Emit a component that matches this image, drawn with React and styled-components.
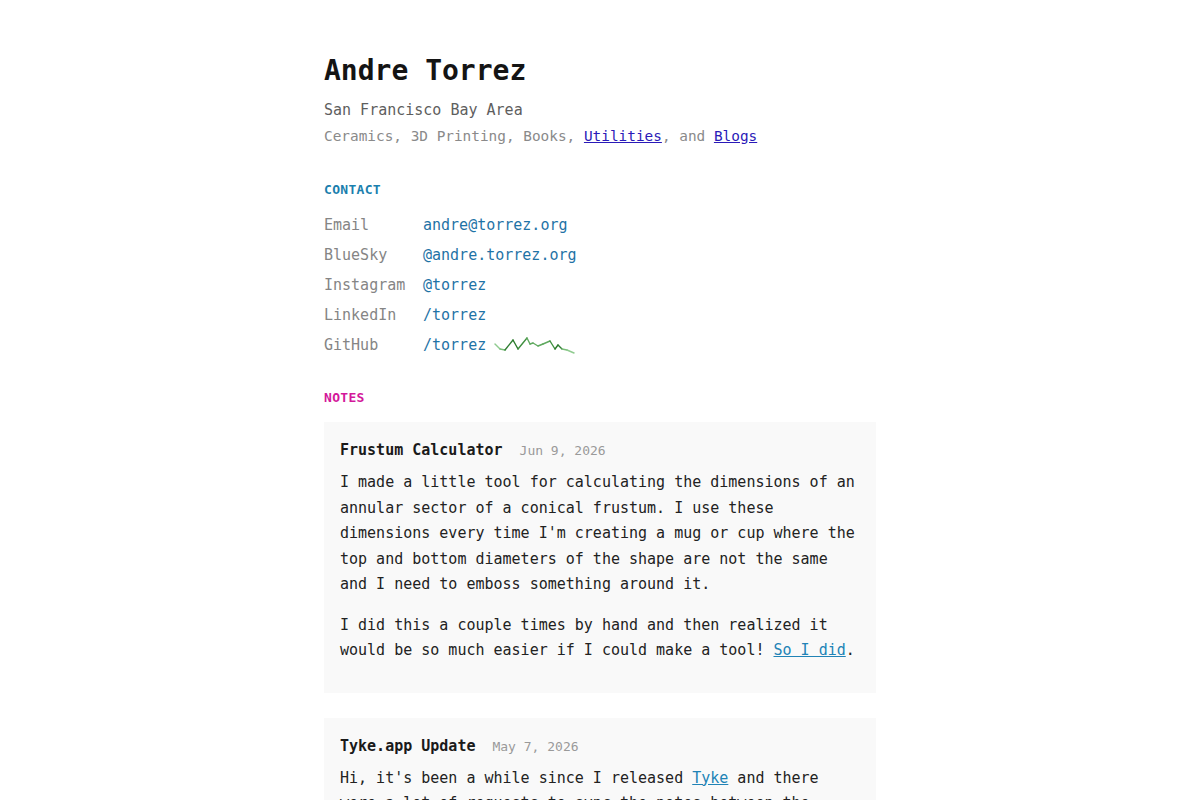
import React from 'react'
import styled, { createGlobalStyle } from 'styled-components'

const GlobalStyle = createGlobalStyle`
  html, body {
    margin: 0;
    padding: 0;
    background: #ffffff;
  }
  body {
    font-family: 'DejaVu Sans Mono', 'Liberation Mono', monospace;
    color: #222;
  }
`

const Page = styled.div`
  max-width: 552px;
  margin: 0 auto;
  padding: 54px 0 40px;
`

const Name = styled.h1`
  margin: 0;
  font-size: 28px;
  line-height: 34px;
  font-weight: bold;
  color: #141414;
`

const Tagline = styled.p`
  margin: ${({ first }) => (first ? '8.5px' : '0')} 0 0;
  font-size: ${({ small }) => (small ? '14.4px' : '15px')};
  line-height: ${({ small }) => (small ? '27px' : '26px')};
  color: ${({ small }) => (small ? '#8a8a8a' : '#5e5e5e')};
`

const PlainLink = styled.a`
  color: #2a1ab8;
  text-decoration: underline;
`

const Heading = styled.h2`
  margin: ${({ top }) => top} 0 0;
  font-size: 13px;
  line-height: 20px;
  font-weight: bold;
  letter-spacing: 0.3px;
  color: ${({ color }) => color};
`

const ContactList = styled.div`
  margin-top: 10px;
  display: grid;
  grid-template-columns: 99px auto;
  grid-auto-rows: 30px;
  align-items: center;
  font-size: 15px;
`

const Label = styled.span`
  color: #858585;
`

const Value = styled.span`
  display: flex;
  align-items: center;
  gap: 8px;
`

const ContactLink = styled.a`
  color: #1f73a6;
  text-decoration: none;
`

const Notes = styled.div`
  margin-top: 14px;
  display: flex;
  flex-direction: column;
  gap: 25px;
`

const Card = styled.article`
  background: #f9f9f9;
  padding: 17px 16px 14px;
`

const CardHead = styled.div`
  display: flex;
  align-items: baseline;
  gap: 17px;
  line-height: 22px;
  margin-bottom: 8px;
`

const CardTitle = styled.h3`
  margin: 0;
  font-size: 15px;
  font-weight: bold;
  color: #1a1a1a;
`

const CardDate = styled.span`
  font-size: 13px;
  color: #9a9a9a;
`

const Para = styled.p`
  margin: 0 0 15px;
  font-size: 15px;
  line-height: 25.5px;
  color: #222;
`

const InlineLink = styled.a`
  color: #2183b6;
  text-decoration: underline;
`

const SPARK = [
  [1, 7], [6, 12], [11, 13], [19, 3], [24, 12], [33, 1], [36, 7], [39, 6],
  [44, 9], [49, 7], [56, 4], [61, 12], [64, 8], [68, 12], [73, 13], [80, 16],
]

const SHADES = ['#8fcb8f', '#79bd79', '#4f9e4f', '#2f7d32', '#2a7a2a', '#3f8f3f', '#5fa95f', '#8bc88b']

const sparkColor = (i) => {
  const t = i / (SPARK.length - 2)
  return SHADES[Math.min(SHADES.length - 1, Math.floor(Math.sin(t * Math.PI) * (SHADES.length - 1) * 0.999))]
}

const Sparkline = () => (
  <svg width="82" height="18" viewBox="0 0 82 18" style={{ marginTop: 2 }}>
    {SPARK.slice(0, -1).map(([x, y], i) => {
      const [x2, y2] = SPARK[i + 1]
      return (
        <line
          key={i}
          x1={x}
          y1={y}
          x2={x2}
          y2={y2}
          stroke={sparkColor(i)}
          strokeWidth="1.4"
          strokeLinecap="round"
        />
      )
    })}
  </svg>
)

const CONTACTS = [
  { label: 'Email', value: 'andre@torrez.org' },
  { label: 'BlueSky', value: '@andre.torrez.org' },
  { label: 'Instagram', value: '@torrez' },
  { label: 'LinkedIn', value: '/torrez' },
  { label: 'GitHub', value: '/torrez', spark: true },
]

export default function App() {
  return (
    <>
      <GlobalStyle />
      <Page>
        <Name>Andre Torrez</Name>
        <Tagline first>San Francisco Bay Area</Tagline>
        <Tagline small>
          Ceramics, 3D Printing, Books, <PlainLink href="#">Utilities</PlainLink>, and{' '}
          <PlainLink href="#">Blogs</PlainLink>
        </Tagline>

        <Heading top="30.5px" color="#1b7fae">CONTACT</Heading>
        <ContactList>
          {CONTACTS.map(({ label, value, spark }) => (
            <React.Fragment key={label}>
              <Label>{label}</Label>
              <Value>
                <ContactLink href="#">{value}</ContactLink>
                {spark && <Sparkline />}
              </Value>
            </React.Fragment>
          ))}
        </ContactList>

        <Heading top="28px" color="#d3189a">NOTES</Heading>
        <Notes>
          <Card>
            <CardHead>
              <CardTitle>Frustum Calculator</CardTitle>
              <CardDate>Jun 9, 2026</CardDate>
            </CardHead>
            <Para>
              I made a little tool for calculating the dimensions of an annular sector of a
              conical frustum. I use these dimensions every time I'm creating a mug or cup
              where the top and bottom diameters of the shape are not the same and I need to
              emboss something around it.
            </Para>
            <Para>
              I did this a couple times by hand and then realized it would be so much easier
              if I could make a tool! <InlineLink href="#">So I did</InlineLink>.
            </Para>
          </Card>
          <Card>
            <CardHead>
              <CardTitle>Tyke.app Update</CardTitle>
              <CardDate>May 7, 2026</CardDate>
            </CardHead>
            <Para>
              Hi, it's been a while since I released <InlineLink href="#">Tyke</InlineLink> and
              there were a lot of requests to sync the notes between the devices you own, so
              I finally got around to building it.
            </Para>
          </Card>
        </Notes>
      </Page>
    </>
  )
}
